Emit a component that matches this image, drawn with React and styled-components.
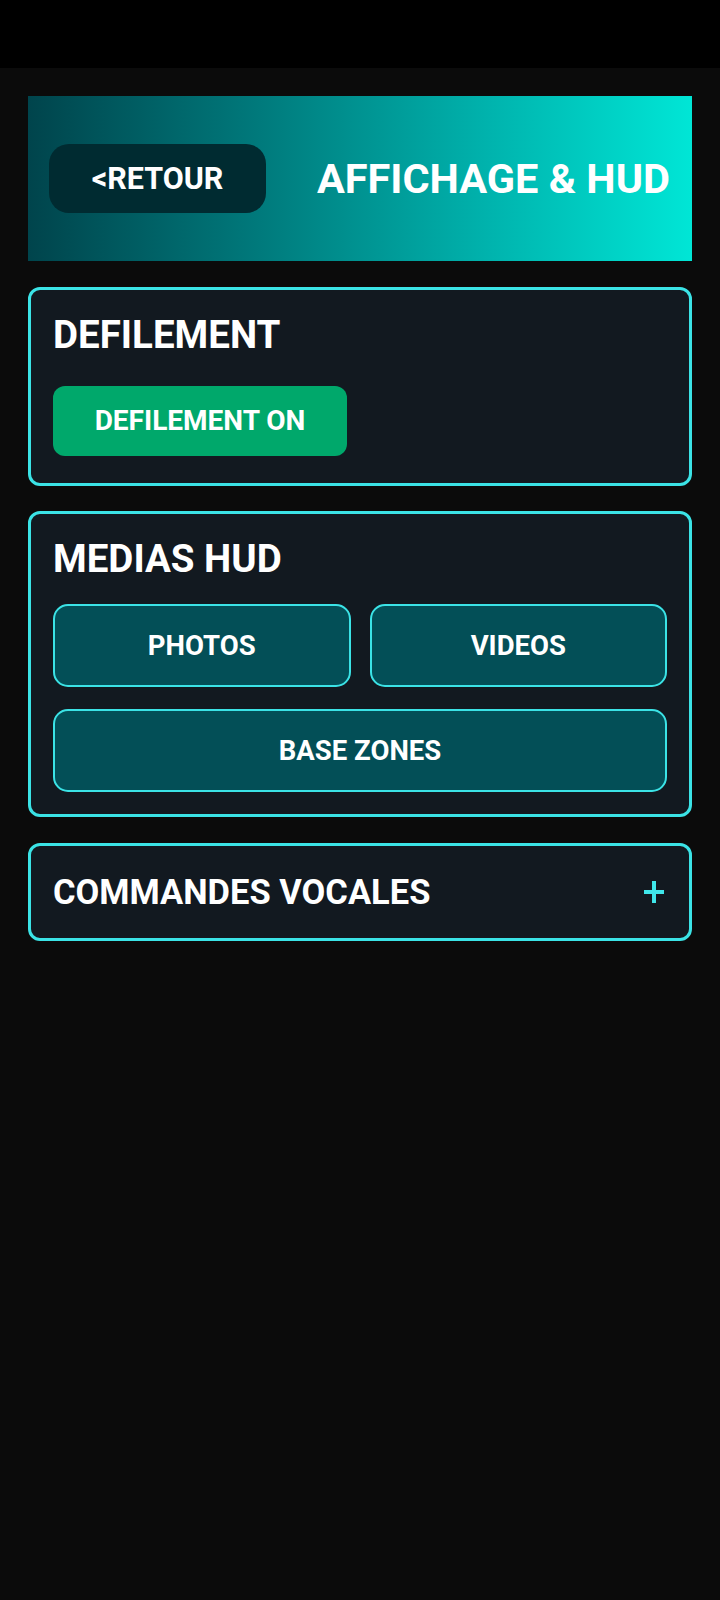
import styled, { createGlobalStyle } from "styled-components";

const GlobalStyle = createGlobalStyle`
  body {
    margin: 0;
    background: #0b0b0b;
    font-family: Roboto, "Liberation Sans", sans-serif;
    color: #ffffff;
  }

  * {
    box-sizing: border-box;
  }
`;

const StatusBar = styled.div`
  height: 68px;
  background: #000000;
`;

const Screen = styled.main`
  display: flex;
  flex-direction: column;
  gap: 25.5px;
  padding: 28px 28px 40px;
`;

const Header = styled.header`
  height: 165px;
  display: flex;
  align-items: center;
  justify-content: space-between;
  padding: 0 22px 0 21px;
  background: linear-gradient(90deg, #00444c 0%, #007a7c 35%, #00b4ae 70%, #00e6d6 100%);
`;

const BackButton = styled.button`
  width: 217px;
  height: 69px;
  border: none;
  border-radius: 20px;
  background: #002b31;
  color: #ffffff;
  font-family: inherit;
  font-size: 30.5px;
  font-weight: 700;
  cursor: pointer;
`;

const Title = styled.h1`
  margin: 0;
  font-size: 41.5px;
  font-weight: 700;
`;

const Card = styled.section`
  display: flex;
  flex-direction: column;
  gap: 23px;
  padding: 22px;
  border: 3px solid #3be3e6;
  border-radius: 12px;
  background: #121920;
`;

const CardTitle = styled.h2`
  margin: 0;
  font-size: ${(props) => props.$size || 38.5}px;
  font-weight: 700;
`;

const ToggleButton = styled.button`
  align-self: flex-start;
  width: 294px;
  height: 70px;
  margin: 6px 0 5px;
  border: none;
  border-radius: 12px;
  background: ${(props) => (props.$active ? "#00a86b" : "#034f57")};
  color: #ffffff;
  font-family: inherit;
  font-size: 28px;
  font-weight: 700;
  cursor: pointer;
`;

const ButtonGrid = styled.div`
  display: grid;
  grid-template-columns: 1fr 1fr;
  column-gap: 19px;
  row-gap: 22px;
`;

const MediaButton = styled.button`
  grid-column: ${(props) => (props.$wide ? "1 / -1" : "auto")};
  height: 83px;
  border: 2px solid #3be3e6;
  border-radius: 15px;
  background: #034f57;
  color: #ffffff;
  font-family: inherit;
  font-size: 27.5px;
  font-weight: 700;
  cursor: pointer;
`;

const CollapsedCard = styled.section`
  height: 98px;
  display: flex;
  align-items: center;
  justify-content: space-between;
  padding: 0 25px 0 22px;
  border: 3px solid #3be3e6;
  border-radius: 12px;
  background: #121920;
`;

const PlusIcon = () => (
  <svg width="20" height="22" viewBox="0 0 20 22" fill="#3fe6ea">
    <rect x="8" y="0" width="4" height="22" />
    <rect x="0" y="9" width="20" height="4" />
  </svg>
);

export default function App() {
  return (
    <>
      <GlobalStyle />
      <StatusBar />
      <Screen>
        <Header>
          <BackButton>&lt;RETOUR</BackButton>
          <Title>AFFICHAGE &amp; HUD</Title>
        </Header>

        <Card>
          <CardTitle>DEFILEMENT</CardTitle>
          <ToggleButton $active>DEFILEMENT ON</ToggleButton>
        </Card>

        <Card>
          <CardTitle>MEDIAS HUD</CardTitle>
          <ButtonGrid>
            <MediaButton>PHOTOS</MediaButton>
            <MediaButton>VIDEOS</MediaButton>
            <MediaButton $wide>BASE ZONES</MediaButton>
          </ButtonGrid>
        </Card>

        <CollapsedCard>
          <CardTitle $size={34.5}>COMMANDES VOCALES</CardTitle>
          <PlusIcon />
        </CollapsedCard>
      </Screen>
    </>
  );
}
